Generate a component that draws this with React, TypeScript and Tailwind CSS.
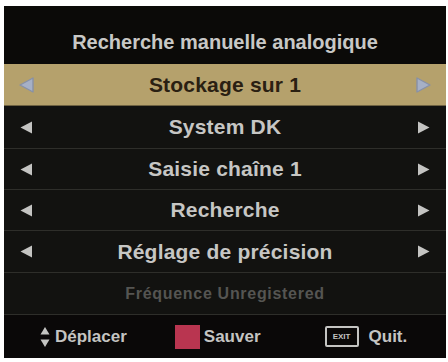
const FONT = { fontFamily: '"Liberation Sans", Arial, sans-serif' }

const ROWS = ['System DK', 'Saisie chaîne 1', 'Recherche', 'Réglage de précision']

function ArrowLeft({ active }: { active?: boolean }) {
  return active ? (
    <svg width="17" height="18" viewBox="0 0 17 18">
      <path d="M15 2 L2 9 L15 16 Z" fill="#a6b0c6" stroke="#8891a6" strokeWidth="1.4" strokeLinejoin="round" />
    </svg>
  ) : (
    <svg width="13" height="13" viewBox="0 0 13 13">
      <path d="M12 0.5 L0.5 6.5 L12 12.5 Z" fill="#c4c4c2" />
    </svg>
  )
}

function ArrowRight({ active }: { active?: boolean }) {
  return active ? (
    <svg width="17" height="18" viewBox="0 0 17 18">
      <path d="M2 2 L15 9 L2 16 Z" fill="#a6b0c6" stroke="#8891a6" strokeWidth="1.4" strokeLinejoin="round" />
    </svg>
  ) : (
    <svg width="13" height="13" viewBox="0 0 13 13">
      <path d="M1 0.5 L12.5 6.5 L1 12.5 Z" fill="#c4c4c2" />
    </svg>
  )
}

function MenuRow({ label, active, h }: { label: string; active?: boolean; h: string }) {
  return (
    <div
      className={`${h} flex items-center justify-between border-b ${
        active ? 'bg-[#b5a16c] border-[#6e6242] px-[14px]' : 'bg-[#121210] border-[#2e2e2a] px-[16px]'
      }`}
    >
      <ArrowLeft active={active} />
      <span
        className={`text-[21px] font-bold tracking-[0.2px] ${active ? 'text-[#2a2012]' : 'text-[#c6c6c4]'}`}
      >
        {label}
      </span>
      <ArrowRight active={active} />
    </div>
  )
}

export default function App() {
  return (
    <div className="w-[448px] h-[362px] bg-white pl-[4px] pr-[2px] pt-[6px] pb-[4px]" style={FONT}>
      <div className="w-full h-full bg-[#0b0a08] flex flex-col">
        {/* Title */}
        <div className="h-[58px] flex items-center justify-center pt-[14px]">
          <h1 className="text-[20px] font-bold text-[#c8c8c6]">Recherche manuelle analogique</h1>
        </div>

        <MenuRow label="Stockage sur 1" active h="h-[42px]" />
        {ROWS.map((r, i) => (
          <MenuRow key={r} label={r} h={i === 0 ? 'h-[43px]' : i === 3 ? 'h-[42px]' : 'h-[41px]'} />
        ))}

        <div className="h-[42px] flex items-center justify-center bg-[#121210] border-b border-[#2e2e2a]">
          <span className="text-[16px] font-bold tracking-[0.7px] text-[#555552]">Fréquence Unregistered</span>
        </div>

        {/* Footer */}
        <div className="flex-1 flex items-center text-[17px] font-bold text-[#c4c4c2] bg-[#0a0808]">
          <div className="flex items-center ml-[36px] gap-[5px]">
            <svg width="10" height="22" viewBox="0 0 10 22">
              <path d="M5 1 L9.5 8.5 L0.5 8.5 Z" fill="#c4c4c2" />
              <path d="M5 21 L9.5 13.5 L0.5 13.5 Z" fill="#c4c4c2" />
            </svg>
            <span>Déplacer</span>
          </div>
          <div className="flex items-center ml-[48px] gap-[4px]">
            <div className="w-[25px] h-[24px] bg-[#b93550]" />
            <span>Sauver</span>
          </div>
          <div className="flex items-center ml-[64px] gap-[10px]">
            <div className="w-[34px] h-[21px] border-2 border-[#c4c4c2] rounded-[2px] flex items-center justify-center">
              <span className="text-[8px] font-bold leading-none">EXIT</span>
            </div>
            <span>Quit.</span>
          </div>
        </div>
      </div>
    </div>
  )
}
